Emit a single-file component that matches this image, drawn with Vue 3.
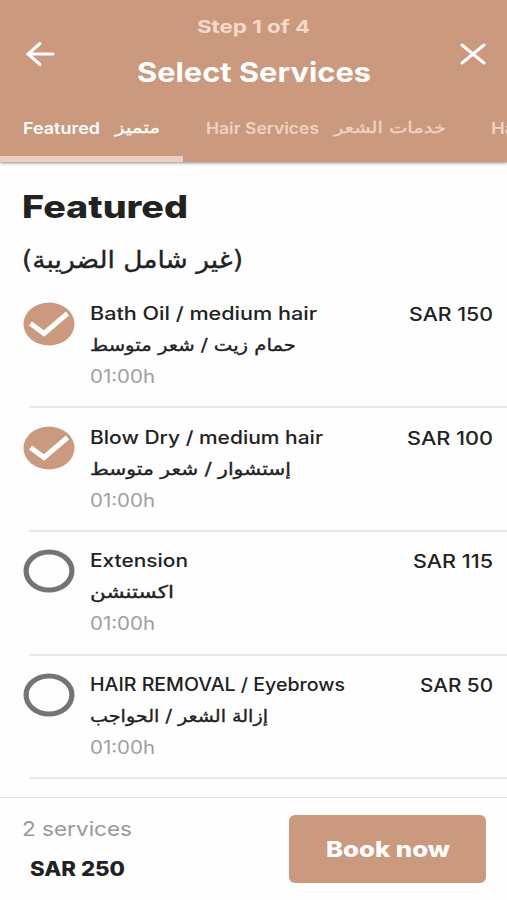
<template>
  <div class="booking">
    <header class="header">
      <div class="header-top">
        <svg class="icon-back" viewBox="0 0 30 26" fill="none">
          <path d="M28 13H3M15 2.5L3 13l12 10.5" />
        </svg>
        <div class="header-text">
          <span v-fit="113" class="fit step">Step 1 of 4</span>
          <span v-fit="234" class="fit title">Select Services</span>
        </div>
        <svg class="icon-close" viewBox="0 0 26 22" fill="none">
          <path d="M2 2l22 18M24 2L2 20" />
        </svg>
      </div>

      <nav class="tabs">
        <div
          v-for="tab in tabs"
          :key="tab.id"
          :class="['tab', { active: tab.id === activeTab }]"
          @click="activeTab = tab.id"
        >
          <span v-fit="tab.width" class="fit">{{ tab.name }}</span>
          <span v-fit="tab.arWidth" class="fit arabic">{{ tab.ar }}</span>
        </div>
      </nav>
    </header>

    <main class="content">
      <h1 v-fit="166" class="fit heading">Featured</h1>
      <div v-fit="221" class="fit arabic tax-note">(غير شامل الضريبة)</div>

      <ul class="services">
        <li
          v-for="service in services"
          :key="service.id"
          class="service"
          @click="service.selected = !service.selected"
        >
          <svg class="check" viewBox="0 0 52 44" fill="none">
            <template v-if="service.selected">
              <ellipse cx="26" cy="22" rx="25.5" ry="21.5" fill="#cb997d" />
              <path d="M7.5 21.5L21 31.5L44.5 11.5" stroke="#fff" stroke-width="5" />
            </template>
            <ellipse v-else cx="26" cy="22" rx="22.9" ry="19" stroke="#747474" stroke-width="5.2" />
          </svg>
          <div class="info">
            <span v-fit="service.width" class="fit name">{{ service.name }}</span>
            <span v-fit="service.arWidth" class="fit arabic name-ar">{{ service.ar }}</span>
            <span v-fit="65" class="fit time">{{ service.time }}</span>
          </div>
          <span v-fit="service.priceWidth" class="fit price">SAR {{ service.price }}</span>
        </li>
      </ul>
    </main>

    <footer class="footer">
      <div class="summary">
        <span v-fit="110" class="fit count">{{ selected.length }} services</span>
        <span v-fit="95" class="fit total">SAR {{ total }}</span>
      </div>
      <button class="book"><span v-fit="124" class="fit">Book now</span></button>
    </footer>
  </div>
</template>

<script setup>
import { ref, computed } from 'vue'

// Stretches a label horizontally to the given width
const vFit = {
  mounted(el, { value }) {
    const natural = el.getBoundingClientRect().width
    el.style.width = `${value}px`
    el.style.transform = `scaleX(${value / natural})`
  }
}

const activeTab = ref(1)

const tabs = [
  { id: 1, name: 'Featured', width: 77, ar: 'متميز', arWidth: 45 },
  { id: 2, name: 'Hair Services', width: 113, ar: 'خدمات الشعر', arWidth: 112 },
  { id: 3, name: 'Hair Color', width: 90, ar: 'صبغة', arWidth: 50 }
]

const services = ref([
  { id: 1, name: 'Bath Oil / medium hair', width: 227, ar: 'حمام زيت / شعر متوسط', arWidth: 206, time: '01:00h', price: 150, priceWidth: 84, selected: true },
  { id: 2, name: 'Blow Dry / medium hair', width: 233, ar: 'إستشوار / شعر متوسط', arWidth: 201, time: '01:00h', price: 100, priceWidth: 86, selected: true },
  { id: 3, name: 'Extension', width: 98, ar: 'اكستنشن', arWidth: 84, time: '01:00h', price: 115, priceWidth: 80, selected: false },
  { id: 4, name: 'HAIR REMOVAL / Eyebrows', width: 255, ar: 'إزالة الشعر / الحواجب', arWidth: 178, time: '01:00h', price: 50, priceWidth: 73, selected: false }
])

const selected = computed(() => services.value.filter(s => s.selected))
const total = computed(() => selected.value.reduce((sum, s) => sum + s.price, 0))
</script>

<style>
body {
  background: #fefefe;
}
</style>

<style scoped>
.booking {
  height: 900px;
  overflow: hidden;
  display: flex;
  flex-direction: column;
  background: #fefefe;
  color: #222;
  font-family: Inter, "DejaVu Sans", sans-serif;
}

.fit {
  display: block;
  width: max-content;
  flex-shrink: 0;
  white-space: nowrap;
  text-align: left;
  unicode-bidi: plaintext;
  transform-origin: left center;
}

.arabic {
  font-family: "DejaVu Sans", sans-serif;
  -webkit-text-stroke: 0.35px currentColor;
}

/* Header */
.header {
  height: 162px;
  box-sizing: border-box;
  flex-shrink: 0;
  display: flex;
  flex-direction: column;
  justify-content: space-between;
  background: #cb997d;
  box-shadow: 0 1px 3px rgba(0, 0, 0, 0.45);
}

.header-top {
  display: flex;
  padding: 12px 21px 0 25px;
}

.header-text {
  flex: 1;
  display: flex;
  flex-direction: column;
  align-items: center;
  margin-right: 8px;
}

.icon-back,
.icon-close {
  flex-shrink: 0;
  stroke: #fff;
  stroke-width: 3;
  stroke-linecap: round;
}

.icon-back {
  width: 30px;
  height: 26px;
  margin-top: 29px;
}

.icon-close {
  width: 26px;
  height: 22px;
  margin-top: 31px;
}

.step {
  font-size: 18px;
  line-height: 30px;
  font-weight: 700;
  color: #f5d9ca;
}

.title {
  font-size: 27.5px;
  line-height: 60px;
  font-weight: 700;
  color: #fff;
}

.tabs {
  display: flex;
  overflow: hidden;
}

.tab {
  flex-shrink: 0;
  display: flex;
  gap: 15px;
  height: 43px;
  box-sizing: border-box;
  padding: 0 23px;
  border-bottom: 6px solid transparent;
  color: #f1d2c2;
  font-size: 15.5px;
  font-weight: 600;
  line-height: 19px;
  cursor: pointer;
}

.tab + .tab {
  padding-right: 22px;
}

.tab .arabic {
  font-size: 15.5px;
  font-weight: 400;
}

.tab.active {
  color: #fff;
  border-bottom-color: #ebd0c2;
}

/* Services */
.content {
  flex: 1;
  min-height: 0;
  padding-left: 22px;
}

.heading {
  margin: 22px 0 0;
  font-size: 31px;
  line-height: 46px;
  font-weight: 800;
}

.tax-note {
  padding-top: 6px;
  font-size: 24px;
  line-height: 48px;
}

.services {
  list-style: none;
  margin: 0;
  padding: 0;
}

.service {
  position: relative;
  display: flex;
  height: 123.7px;
  box-sizing: border-box;
  padding: 16px 14px 0 0.5px;
  cursor: pointer;
}

.service::after {
  content: "";
  position: absolute;
  left: 7px;
  right: 0;
  bottom: -0.5px;
  height: 2px;
  background: #e9e9e9;
}

.check {
  width: 52px;
  height: 44px;
  margin: 2px 15.5px 0 0;
  flex-shrink: 0;
}

.info {
  flex: 1;
}

.name {
  font-size: 18px;
  line-height: 27px;
  font-weight: 500;
}

.name-ar {
  font-size: 17.5px;
  line-height: 36px;
}

.time {
  font-size: 18px;
  line-height: 28px;
  color: #a0a0a0;
}

.price {
  font-size: 18.5px;
  line-height: 28px;
  font-weight: 500;
}

/* Footer */
.footer {
  height: 103px;
  box-sizing: border-box;
  flex-shrink: 0;
  display: flex;
  justify-content: space-between;
  padding: 17px 21px 0 22px;
  border-top: 1px solid #dfdfdf;
}

.count {
  font-size: 20px;
  line-height: 29px;
  color: #999;
}

.total {
  margin: 9px 0 0 7.5px;
  font-size: 19.5px;
  line-height: 32px;
  font-weight: 800;
}

.book {
  display: flex;
  align-items: center;
  justify-content: center;
  width: 197px;
  height: 68px;
  padding: 0;
  border: none;
  border-radius: 6px;
  background: #cb997d;
  color: #fff;
  font-family: inherit;
  font-size: 22px;
  font-weight: 800;
  cursor: pointer;
}
</style>
